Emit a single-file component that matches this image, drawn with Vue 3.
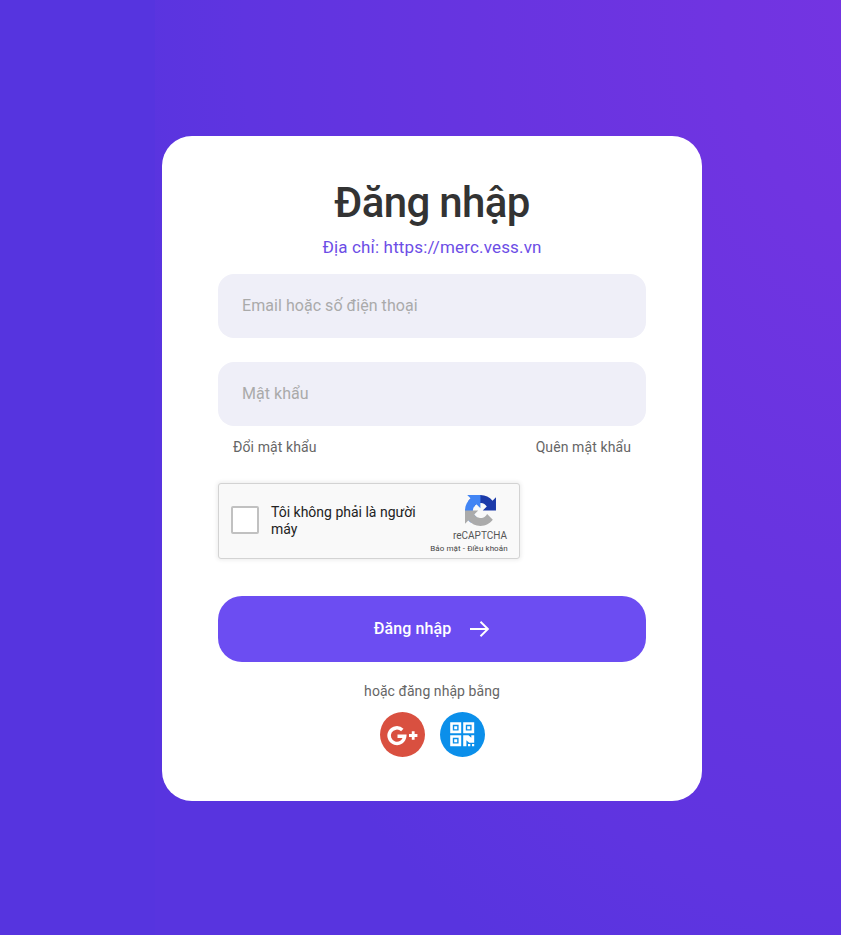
<script setup>
import { ref } from 'vue'

const account = ref('')
const password = ref('')
</script>

<template>
  <main class="page">
    <form class="card" @submit.prevent>
      <h1 class="title">Đăng nhập</h1>
      <p class="address">Địa chỉ: https://merc.vess.vn</p>
      <input v-model="account" class="field" type="text" placeholder="Email hoặc số điện thoại" />
      <input v-model="password" class="field second" type="password" placeholder="Mật khẩu" />
      <div class="links">
        <a>Đổi mật khẩu</a>
        <a>Quên mật khẩu</a>
      </div>

      <div class="captcha">
        <span class="box"></span>
        <span class="captcha-label">Tôi không phải là người máy</span>
        <div class="brand">
          <svg class="brand-logo" width="31" height="31" viewBox="0 0 64 64">
            <path fill="#1c3aa9" d="M64 31.955l-.033-1.370V4.687l-7.160 7.160C50.948 4.674 42.033.093 32.050.093c-10.400 0-19.622 4.960-25.458 12.640l11.736 11.860a15.550 15.550 0 0 1 4.754-5.334c2.050-1.600 4.952-2.906 8.968-2.906.485 0 .860.057 1.135.163 4.976.393 9.288 3.140 11.828 7.124l-8.307 8.307L64 31.953" />
            <path fill="#4285f4" d="M31.862.094l-1.370.033H4.594l7.160 7.160C4.580 13.147 0 22.060 0 32.046c0 10.400 4.960 19.622 12.640 25.458L24.500 45.768a15.550 15.550 0 0 1-5.334-4.754c-1.600-2.050-2.906-4.952-2.906-8.968 0-.485.057-.860.163-1.135.393-4.976 3.140-9.288 7.124-11.828l8.307 8.307L31.860.095" />
            <path fill="#ababab" d="M.001 32.045l.033 1.370v25.898l7.160-7.160c5.860 7.173 14.774 11.754 24.760 11.754 10.400 0 19.622-4.960 25.458-12.640l-11.736-11.860a15.550 15.550 0 0 1-4.754 5.334c-2.050 1.600-4.952 2.906-8.968 2.906-.485 0-.860-.057-1.135-.163-4.976-.393-9.288-3.140-11.828-7.124l8.307-8.307c-10.522.040-22.400.066-27.295-.005" />
          </svg>
          <span class="brand-name">reCAPTCHA</span>
          <span class="brand-links">Bảo mật - Điều khoản</span>
        </div>
      </div>

      <button class="submit" type="submit">
        <span class="submit-label">Đăng nhập</span>
        <svg width="20" height="18" viewBox="0 0 20 18" fill="none" stroke="#fff" stroke-width="1.900">
          <path d="M0 9H18.500M10.500 1.700L17.900 9L10.500 16.300" />
        </svg>
      </button>

      <p class="alternative">hoặc đăng nhập bằng</p>
      <div class="social">
        <svg width="45" height="45" viewBox="0 0 45 45">
          <circle cx="22.500" cy="22.500" r="22.500" fill="#d95040" />
          <path d="M22.300 18A7.800 7.800 0 1 0 24.700 24.200H17.500" fill="none" stroke="#fff" stroke-width="3.500" />
          <path d="M33.200 19.300V27.700M29 23.500H37.400" stroke="#fff" stroke-width="2.800" />
        </svg>
        <svg width="45" height="45" viewBox="0 0 45 45">
          <circle cx="22.500" cy="22.500" r="22.500" fill="#0b8fea" />
          <g fill="none" stroke="#fff" stroke-width="2.600">
            <path d="M11.500 11.500H19.900V19.900H11.500ZM24.500 11.500H32.900V19.900H24.500ZM11.500 24.500H19.900V32.900H11.500Z" />
          </g>
          <path fill="#fff" d="M14.200 14.200h3v3h-3zM27.200 14.200h3v3h-3zM14.200 27.200h3v3h-3zM23.200 23.200h5.300l2.800 2.600V23.200h2.900v7.500h-5l-2.800-2.400v5.900h-3.200zM28 32h2.300v2.200H28zM32 32h2.200v2.200H32z" />
        </svg>
      </div>
    </form>
  </main>
</template>

<style>
body {
  margin: 0;
}
</style>

<style scoped>
.page {
  box-sizing: border-box;
  height: 935px;
  padding: 136px 0 0 162px;
  overflow: hidden;
  font-family: Roboto, sans-serif;
  background:
    linear-gradient(#5634df, #5634df) 0 0 / 155px 100% no-repeat,
    radial-gradient(ellipse 790px 1110px at 900px 0, #7534e2 0%, #7034e1 22%, #6734e0 54%, #5f34e0 83%, #5834df 100%);
}

.card {
  box-sizing: border-box;
  display: flex;
  flex-direction: column;
  width: 540px;
  height: 665px;
  padding: 43px 56px 0;
  background: #fff;
  border-radius: 30px;
}

.title {
  margin: 0;
  font-size: 42px;
  font-weight: 500;
  line-height: 48px;
  letter-spacing: -0.65px;
  text-align: center;
  color: #333;
}

.address {
  margin: 8px 0 15px;
  font-size: 17px;
  line-height: 24px;
  letter-spacing: 0.16px;
  text-align: center;
  color: #6c4de6;
}

.field {
  box-sizing: border-box;
  flex: none;
  width: 100%;
  height: 64px;
  padding: 0 24px 2px;
  font: 400 16px Roboto, sans-serif;
  letter-spacing: 0.05px;
  color: #333;
  background: #efeff8;
  border: 0;
  border-radius: 16px;
  outline: 0;
}

.field::placeholder {
  color: #aaa;
  opacity: 1;
}

.second {
  margin-top: 24px;
}

.links {
  display: flex;
  justify-content: space-between;
  margin-top: 11px;
  padding: 0 15px;
  font-size: 14px;
  line-height: 20px;
  letter-spacing: 0.1px;
  color: #666;
}

.captcha {
  box-sizing: border-box;
  display: flex;
  align-items: center;
  flex: none;
  width: 302px;
  height: 76px;
  margin-top: 26px;
  padding-left: 12px;
  background: #f9f9f9;
  border: 1px solid #d3d3d3;
  border-radius: 3px;
  box-shadow: 0 0 4px 1px rgba(0, 0, 0, 0.08);
}

.box {
  box-sizing: border-box;
  flex: none;
  width: 28px;
  height: 28px;
  margin-top: -2px;
  background: #fff;
  border: 2px solid #c1c1c1;
  border-radius: 2px;
}

.captcha-label {
  width: 152px;
  margin-left: 12px;
  font-size: 14px;
  line-height: 17px;
  color: #222;
}

.brand {
  display: flex;
  flex-direction: column;
  align-items: center;
  width: 84px;
  height: 100%;
  margin-left: 4px;
  color: #555;
  white-space: nowrap;
}

.brand-logo {
  margin: 11px 0 0 22px;
}

.brand-name {
  margin: 5px 0 0 22px;
  font-size: 10px;
  line-height: 10px;
}

.brand-links {
  margin-top: 3px;
  font-size: 8px;
  line-height: 10px;
  letter-spacing: 0.08px;
  color: #444;
}

.submit {
  display: flex;
  align-items: center;
  justify-content: center;
  gap: 19px;
  flex: none;
  height: 66px;
  margin-top: 37px;
  padding: 0;
  font: 500 16px Roboto, sans-serif;
  letter-spacing: 0.1px;
  color: #fff;
  background: #6c4df2;
  border: 0;
  border-radius: 24px;
}

.submit-label {
  padding-bottom: 2px;
}

.alternative {
  margin: 19px 0 11px;
  font-size: 14px;
  line-height: 20px;
  letter-spacing: 0.06px;
  text-align: center;
  color: #666;
}

.social {
  display: flex;
  justify-content: center;
  gap: 15px;
}
</style>
